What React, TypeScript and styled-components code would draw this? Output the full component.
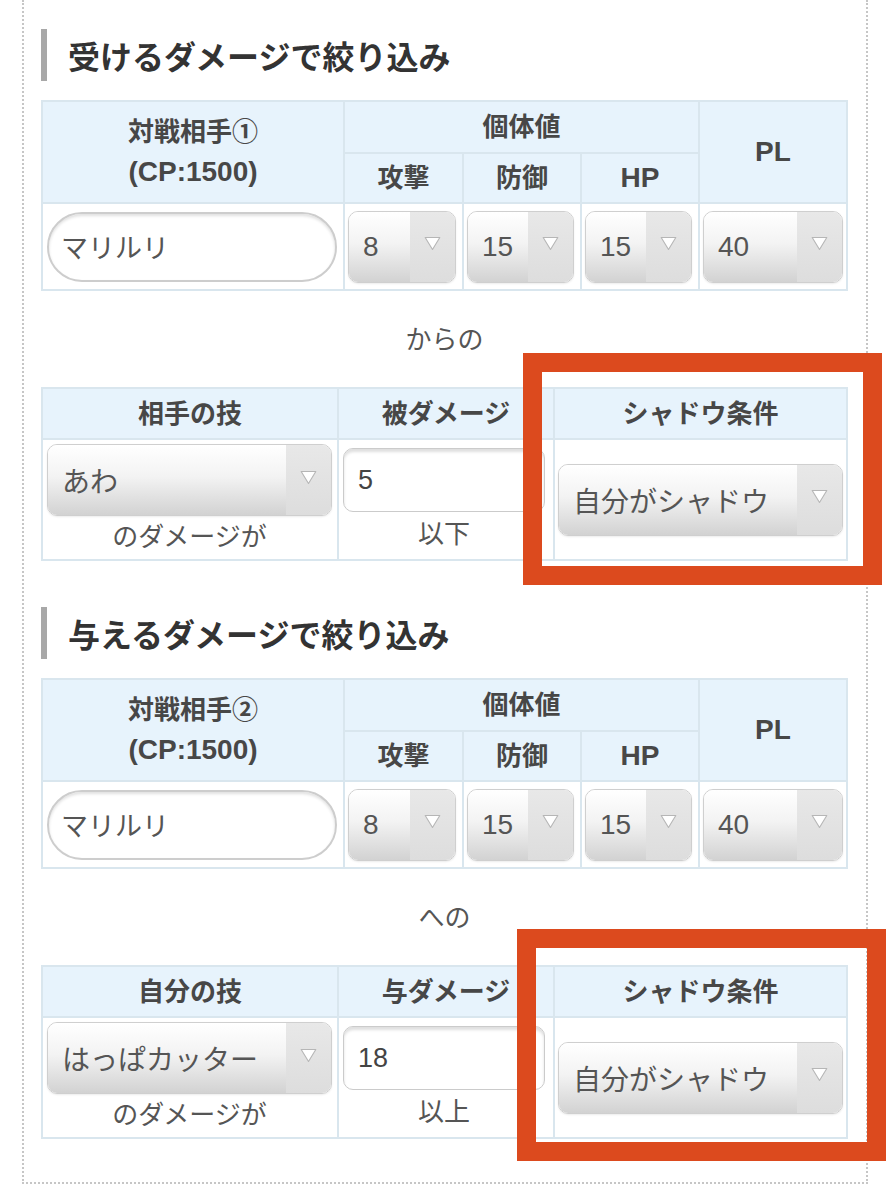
import React from "react";
import styled, { createGlobalStyle } from "styled-components";

const GlobalStyle = createGlobalStyle`
  *, *::before, *::after { box-sizing: border-box; }
  html, body { margin: 0; padding: 0; background: #ffffff; }
  body {
    font-family: "Liberation Sans", "Noto Sans CJK JP", sans-serif;
    color: #444444;
  }
`;

const Frame = styled.div`
  margin-left: 22px;
  width: 846px;
  border: 2px dotted #c6c6c6;
  border-top: none;
  padding: 29px 18px 43px 17px;
`;

const Section = styled.section<{ $first?: boolean }>`
  margin-top: ${(p) => (p.$first ? 0 : 46)}px;
`;

const Heading = styled.h2`
  margin: 0 0 19px 0;
  height: 52px;
  border-left: 6px solid #a8a8a8;
  padding-left: 21px;
  font-size: 32px;
  line-height: 52px;
  font-weight: 700;
  color: #333333;
  font-family: "Noto Sans CJK JP", sans-serif;
`;

const TableWrap = styled.div`
  position: relative;
`;

const Grid = styled.div<{ $cols: string; $rows: string }>`
  display: grid;
  grid-template-columns: ${(p) => p.$cols};
  grid-template-rows: ${(p) => p.$rows};
  gap: 2px;
  padding: 2px;
  background: #d9e6ee;
`;

const Head = styled.div<{ $cspan?: number; $rspan?: number }>`
  grid-column: span ${(p) => p.$cspan ?? 1};
  grid-row: span ${(p) => p.$rspan ?? 1};
  background: #e7f3fc;
  display: flex;
  flex-direction: column;
  align-items: center;
  justify-content: center;
  font-size: 26px;
  line-height: 40px;
  font-weight: 700;
  color: #474747;
`;

const Latin = styled.span`
  font-family: "Liberation Sans", sans-serif;
  font-size: 28px;
`;

const Cell = styled.div<{ $pad: string; $center?: boolean }>`
  background: #ffffff;
  display: flex;
  flex-direction: column;
  justify-content: ${(p) => (p.$center ? "center" : "flex-start")};
  padding: ${(p) => p.$pad};
`;

const NameInput = styled.div`
  height: 70px;
  border: 2px solid #cdcdcd;
  border-radius: 35px;
  box-shadow: inset 0 2px 3px rgba(0, 0, 0, 0.12);
  display: flex;
  align-items: center;
  padding-left: 12px;
  font-size: 27px;
  color: #555555;
`;

const SelectBox = styled.div`
  display: flex;
  height: 72px;
  border: 1px solid #cfcfcf;
  border-radius: 10px;
  overflow: hidden;
  box-shadow: 0 1px 2px rgba(0, 0, 0, 0.08);
`;

const SelectValue = styled.span`
  flex: 1;
  display: flex;
  align-items: center;
  padding-left: 14px;
  background: linear-gradient(#ffffff 0%, #f3f3f3 45%, #d2d2d2 100%);
  font-size: 28px;
  color: #555555;
  white-space: nowrap;
  overflow: hidden;
`;

const SelectArrow = styled.span`
  width: 45px;
  flex: none;
  display: flex;
  align-items: center;
  justify-content: center;
  padding-bottom: 6px;
  background: linear-gradient(#e8e8e8, #dddddd);
`;

const NumInput = styled.div`
  height: 64px;
  border: 1px solid #cbcbcb;
  border-radius: 10px;
  box-shadow: inset 0 3px 3px rgba(0, 0, 0, 0.13);
  display: flex;
  align-items: center;
  padding-left: 14px;
  font-size: 27px;
  color: #444444;
`;

const Note = styled.div<{ $h: number }>`
  height: ${(p) => p.$h}px;
  line-height: ${(p) => p.$h}px;
  text-align: center;
  font-size: 26px;
  color: #555555;
`;

const Connector = styled.div`
  height: 96px;
  display: flex;
  align-items: center;
  justify-content: center;
  padding-bottom: 4px;
  font-size: 26px;
  color: #555555;
`;

const Highlight = styled.div<{ $left: number; $top: number; $w: number; $h: number }>`
  position: absolute;
  left: ${(p) => p.$left}px;
  top: ${(p) => p.$top}px;
  width: ${(p) => p.$w}px;
  height: ${(p) => p.$h}px;
  border: 19px solid #dc4a1e;
  pointer-events: none;
`;

const Arrow = () => (
  <svg width="17" height="15" viewBox="0 0 17 15">
    <path
      d="M1.2 1.5 H15.8 L8.5 13.5 Z"
      fill="#ffffff"
      stroke="#b6b6b6"
      strokeWidth="1.1"
      strokeLinejoin="round"
    />
  </svg>
);

const Select = ({ value }: { value: string }) => (
  <SelectBox>
    <SelectValue>{value}</SelectValue>
    <SelectArrow>
      <Arrow />
    </SelectArrow>
  </SelectBox>
);

type OpponentProps = { label: string };

const OpponentTable = ({ label }: OpponentProps) => (
  <TableWrap>
    <Grid $cols="300px 117px 116px 116px 146px" $rows="50px 48px 85px">
      <Head $rspan={2}>
        <span>{label}</span>
        <Latin>(CP:1500)</Latin>
      </Head>
      <Head $cspan={3}>個体値</Head>
      <Head $rspan={2}>
        <Latin>PL</Latin>
      </Head>
      <Head>攻撃</Head>
      <Head>防御</Head>
      <Head>
        <Latin>HP</Latin>
      </Head>
      <Cell $pad="0 6px 0 4px" $center>
        <NameInput>マリルリ</NameInput>
      </Cell>
      <Cell $pad="0 6px 0 3px" $center>
        <Select value="8" />
      </Cell>
      <Cell $pad="0 6px 0 3px" $center>
        <Select value="15" />
      </Cell>
      <Cell $pad="0 6px 0 3px" $center>
        <Select value="15" />
      </Cell>
      <Cell $pad="0 3px 0 3px" $center>
        <Select value="40" />
      </Cell>
    </Grid>
  </TableWrap>
);

type DamageProps = {
  moveHead: string;
  move: string;
  dmgHead: string;
  dmg: string;
  bound: string;
  box: { left: number; top: number; w: number; h: number };
};

const DamageTable = ({ moveHead, move, dmgHead, dmg, bound, box }: DamageProps) => (
  <TableWrap>
    <Grid $cols="294px 214px 291px" $rows="49px 119px">
      <Head>{moveHead}</Head>
      <Head>{dmgHead}</Head>
      <Head>シャドウ条件</Head>
      <Cell $pad="4px 5px 0 4px">
        <Select value={move} />
        <Note $h={42}>のダメージが</Note>
      </Cell>
      <Cell $pad="8px 8px 0 4px">
        <NumInput>{dmg}</NumInput>
        <Note $h={44}>{bound}</Note>
      </Cell>
      <Cell $pad="0 3px" $center>
        <Select value="自分がシャドウ" />
      </Cell>
    </Grid>
    <Highlight $left={box.left} $top={box.top} $w={box.w} $h={box.h} />
  </TableWrap>
);

export default function App() {
  return (
    <>
      <GlobalStyle />
      <Frame>
        <Section $first>
          <Heading>受けるダメージで絞り込み</Heading>
          <OpponentTable label="対戦相手①" />
          <Connector>からの</Connector>
          <DamageTable
            moveHead="相手の技"
            move="あわ"
            dmgHead="被ダメージ"
            dmg="5"
            bound="以下"
            box={{ left: 482, top: -34, w: 359, h: 232 }}
          />
        </Section>
        <Section>
          <Heading>与えるダメージで絞り込み</Heading>
          <OpponentTable label="対戦相手②" />
          <Connector>への</Connector>
          <DamageTable
            moveHead="自分の技"
            move="はっぱカッター"
            dmgHead="与ダメージ"
            dmg="18"
            bound="以上"
            box={{ left: 476, top: -36, w: 369, h: 232 }}
          />
        </Section>
      </Frame>
    </>
  );
}
